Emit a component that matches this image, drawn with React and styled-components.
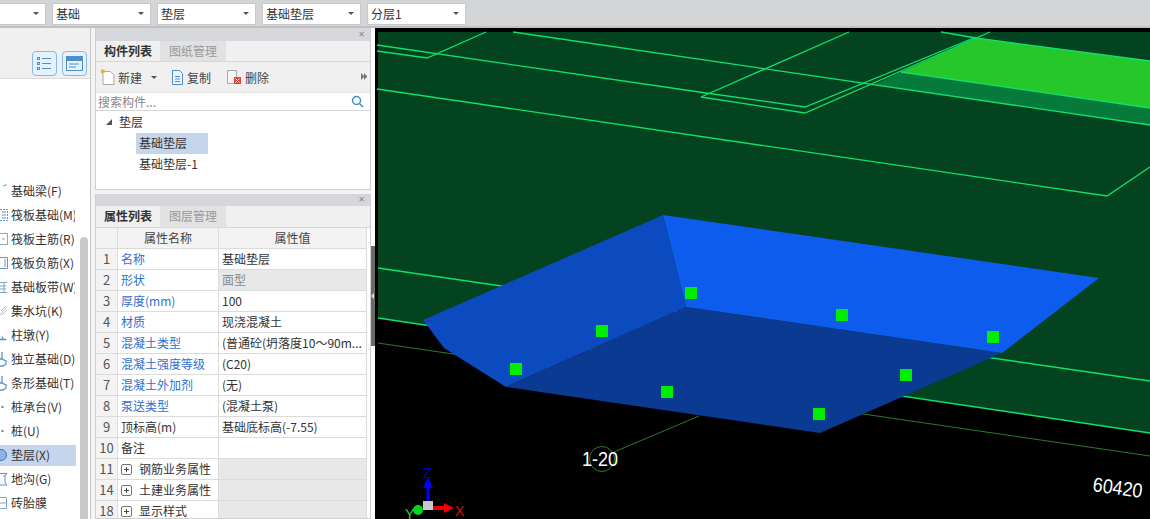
import * as React from 'react';
import styled, { createGlobalStyle } from 'styled-components';

const GlobalStyle = createGlobalStyle`
  html, body { margin: 0; padding: 0; background: #f0f0f0; }
  * { box-sizing: border-box; }
  body { font-family: "Noto Sans CJK SC", "Liberation Sans", sans-serif; font-size: 12px; color: #222; }
`;

const Page = styled.div`
  width: 1150px;
  height: 519px;
  overflow: hidden;
  display: flex;
  flex-direction: column;
  background: #f3f3f3;
`;

const TopBar = styled.div`
  height: 28px;
  flex: none;
  display: flex;
  gap: 6px;
  padding: 3px 0 0;
  margin-left: -53px;
  background: #d3d5d7;
  border-bottom: 2px solid #bfc1c3;
`;

const SelectBox = styled.div`
  width: 99px;
  height: 22px;
  background: #fff;
  border: 1px solid #c6c8ca;
  display: flex;
  align-items: center;
  justify-content: space-between;
  padding: 0 6px 1px 3px;
  font-size: 12px;
  line-height: 20px;
  color: #333;
`;

const Caret = styled.span`
  width: 0;
  height: 0;
  border-left: 3px solid transparent;
  border-right: 3px solid transparent;
  border-top: 3px solid #555;
`;

const Body = styled.div`
  flex: 1;
  min-height: 0;
  display: flex;
`;

const LeftPane = styled.div`
  width: 91px;
  flex: none;
  background: #fff;
  border-right: 1px solid #c8c8c8;
  display: flex;
  flex-direction: column;
  overflow: hidden;
  position: relative;
`;

const LeftHead = styled.div`
  height: 51px;
  flex: none;
  background: #f0f0f0;
  border-bottom: 1px solid #d8dce0;
  display: flex;
  justify-content: flex-end;
  align-items: flex-end;
  gap: 5px;
  padding: 0 3px 2px 0;
`;

const ViewButton = styled.div`
  width: 25px;
  height: 25px;
  border: 1px solid #86b8e8;
  border-radius: 4px;
  background: #e6f1fb;
  display: flex;
  align-items: center;
  justify-content: center;
`;

const NavList = styled.div`
  padding-top: 100px;
  display: flex;
  flex-direction: column;
  width: 76px;
`;

const NavItem = styled.div`
  height: 24px;
  display: flex;
  align-items: center;
  white-space: nowrap;
  overflow: hidden;
  font-size: 12px;
  color: #333;
  background: ${(p) => (p.$active ? 'linear-gradient(#fff 2px, #c5d5ec 2px, #c5d5ec 23px, #fff 23px)' : 'transparent')};
`;

const NavLabel = styled.span`
  display: block;
  width: 64px;
  overflow: hidden;
  padding-bottom: 2px;
`;

const NavIcon = styled.svg`
  width: 8px;
  height: 16px;
  margin-right: 3px;
  flex: none;
`;

const Scroll = styled.div`
  position: absolute;
  left: 80px;
  top: 209px;
  width: 8px;
  height: 290px;
  border-radius: 4px;
  background: #c9c9c9;
`;

const Center = styled.div`
  width: 276px;
  margin-left: 4px;
  flex: none;
  display: flex;
  flex-direction: column;
  gap: 4px;
`;

const Panel = styled.div`
  display: flex;
  flex-direction: column;
  border: 1px solid #cfcfcf;
  border-top: 0;
  background: #fff;
  flex: ${(p) => p.$grow || 'none'};
  height: ${(p) => (p.$h ? `${p.$h}px` : 'auto')};
  overflow: hidden;
`;

const Grip = styled.div`
  height: ${(p) => p.$h}px;
  flex: none;
  background: #d5d7da;
  color: #8a8a8a;
  font-size: 8px;
  line-height: ${(p) => p.$h}px;
  text-align: right;
  padding-right: 5px;
  font-family: "DejaVu Sans", sans-serif;
`;

const TabRow = styled.div`
  height: ${(p) => p.$h}px;
  flex: none;
  display: flex;
  background: #f0f0f0;
  border-bottom: 1px solid #d8d8d8;
`;

const Tab = styled.div`
  width: ${(p) => (p.$active ? '64px' : '66px')};
  text-align: center;
  line-height: 19px;
  font-size: 12px;
  font-weight: ${(p) => (p.$active ? 700 : 400)};
  color: ${(p) => (p.$active ? '#333' : '#999')};
  background: ${(p) => (p.$active ? '#f0f0f0' : '#e2e2e2')};
`;

const ActionBar = styled.div`
  height: 30px;
  flex: none;
  background: #f0f0f0;
  display: flex;
  align-items: center;
  padding-left: 4px;
  color: #444;
  position: relative;
`;

const Action = styled.div`
  display: flex;
  align-items: center;
  gap: 3px;
  margin-left: ${(p) => p.$before || 0}px;
  margin-right: ${(p) => p.$gap || 14}px;
  font-size: 12px;
`;

const More = styled.span`
  position: absolute;
  right: 3px;
  top: 11px;
  width: 6px;
  height: 7px;
  display: flex;
  &::before, &::after {
    content: '';
    border-left: 3px solid #777;
    border-top: 3px solid transparent;
    border-bottom: 3px solid transparent;
  }
`;

const SearchRow = styled.div`
  height: 19px;
  flex: none;
  display: flex;
  align-items: center;
  justify-content: space-between;
  padding: 0 6px 0 2px;
  border-top: 1px solid #e4e4e4;
  border-bottom: 1px solid #d6d6d6;
  color: #888;
  font-size: 12px;
`;

const Tree = styled.div`
  flex: 1;
  padding-top: 1px;
  display: flex;
  flex-direction: column;
  font-size: 12px;
  color: #333;
`;

const TreeRoot = styled.div`
  height: 21px;
  display: flex;
  align-items: center;
  gap: 7px;
  padding: 0 0 2px 10px;
`;

const TreeLeaf = styled.div`
  margin-left: 40px;
  width: 72px;
  height: 21px;
  line-height: 19px;
  padding-left: 3px;
  white-space: nowrap;
  background: ${(p) => (p.$active ? '#c5d5ec' : 'transparent')};
`;

const Grid = styled.div`
  display: grid;
  grid-template-columns: 22px 101px 148px;
  grid-auto-rows: 21px;
  font-size: 12px;
  line-height: 20px;
`;

const Cell = styled.div`
  border-right: 1px solid #dcdcdc;
  border-bottom: 1px solid #dcdcdc;
  white-space: nowrap;
  overflow: hidden;
  padding-left: 3px;
  display: flex;
  align-items: center;
  gap: 7px;
  color: ${(p) => p.$color || '#333'};
  background: ${(p) => p.$bg || '#fff'};
`;

const HeadCell = styled(Cell)`
  justify-content: center;
  padding: 0;
  background: #f3f3f3;
  color: #444;
`;

const NumCell = styled(Cell)`
  justify-content: center;
  padding: 0;
  font-size: 13px;
  background: #f3f3f3;
  color: #555;
`;

const PlusBox = styled.span`
  width: 11px;
  height: 11px;
  border: 1px solid #777;
  border-radius: 2px;
  flex: none;
  position: relative;
  &::before { content: ''; position: absolute; left: 2px; right: 2px; top: 4px; height: 1px; background: #444; }
  &::after { content: ''; position: absolute; top: 2px; bottom: 2px; left: 4px; width: 1px; background: #444; }
`;

const Divider = styled.div`
  width: 4px;
  flex: none;
  display: flex;
  align-items: center;
  background: #fff;
`;

const Handle = styled.div`
  width: 4px;
  height: 100px;
  margin-top: 45px;
  background: #6a6a6a;
  position: relative;
  &::after {
    content: '';
    position: absolute;
    left: 0;
    top: 47px;
    border-right: 3px solid #d8d8d8;
    border-top: 3px solid transparent;
    border-bottom: 3px solid transparent;
  }
`;

const Viewport = styled.svg`
  flex: 1;
  display: block;
  height: 491px;
  background: #000;
`;

const LINE = '#10e06c';
const SANS = 'Liberation Sans, sans-serif';

const navItems = [
  ['基础梁(F)', 'beam'],
  ['筏板基础(M)', 'raft'],
  ['筏板主筋(R)', 'outline'],
  ['筏板负筋(X)', 'frame'],
  ['基础板带(W)', 'strip'],
  ['集水坑(K)', 'pit'],
  ['柱墩(Y)', 'pier'],
  ['独立基础(D)', 'foot'],
  ['条形基础(T)', 'foot'],
  ['桩承台(V)', 'dot'],
  ['桩(U)', 'dot'],
  ['垫层(X)', 'disc', true],
  ['地沟(G)', 'trench'],
  ['砖胎膜', 'brick'],
];

const rows = [
  ['1', '名称', '基础垫层', true],
  ['2', '形状', '面型', true, true],
  ['3', '厚度(mm)', '100', true],
  ['4', '材质', '现浇混凝土', true],
  ['5', '混凝土类型', '(普通砼(坍落度10～90m...', true],
  ['6', '混凝土强度等级', '(C20)', true],
  ['7', '混凝土外加剂', '(无)', true],
  ['8', '泵送类型', '(混凝土泵)', true],
  ['9', '顶标高(m)', '基础底标高(-7.55)'],
  ['10', '备注', ''],
];

const groups = [
  ['11', '钢筋业务属性'],
  ['14', '土建业务属性'],
  ['18', '显示样式'],
];

const handles = [
  [691, 293], [842, 315], [993, 337], [602, 331],
  [906, 375], [516, 369], [667, 392], [819, 414],
];

const lines = [
  '377,45 706,93 805,107 976,37',
  '377,51 427,58 486,32',
  '513,32 1150,125',
  '701,97 805,113 990,32',
  '701,97 849,32',
  '941,32 976,38 1150,61',
  '901,72 1150,108',
  '377,89 1107,196 1150,167',
];

const NavGlyph = ({ kind }) => (
  <NavIcon viewBox="0 0 8 16" fill="none">
    {kind === 'beam' && <path d="M3 3.5L6 1.5M6 1.5V3" stroke="#6fa3d8" />}
    {kind === 'raft' && <path d="M0 2.5H7.5V13.5H0M5 4V12M3 4V12" stroke="#5d93cc" strokeDasharray="2 1" />}
    {kind === 'outline' && <path d="M0 2.5H7.5V13.5H0M2 8H5" stroke="#8aa9c8" />}
    {kind === 'frame' && <path d="M0 2.5H7.5V13.5H0M5 4V12" stroke="#6a93bd" />}
    {kind === 'strip' && <path d="M0 3.5H7M0 7H6M0 10H6M0 13.5H7M4 4V13" stroke="#7fa5cc" />}
    {kind === 'pit' && <path d="M0 12L6 5M1 8L6 3M2 12L7 7" stroke="#b4c0cc" />}
    {kind === 'pier' && <path d="M0 12.5H6.5M2.5 9.5V12" stroke="#5d93cc" strokeWidth="1.4" />}
    {kind === 'foot' && <path d="M2 1V8L6 10V13L3 15H0M0 8H3" stroke="#5d93cc" strokeWidth="1.3" />}
    {kind === 'dot' && <circle cx="2.5" cy="8" r="1.2" fill="#7c8c9c" />}
    {kind === 'disc' && <circle cx="1" cy="8" r="5.5" fill="#8db4e2" stroke="#3f78bd" />}
    {kind === 'trench' && <path d="M0 2.5H7L5 5V12L7 14H0M3 5H5" stroke="#5d93cc" />}
    {kind === 'brick' && <path d="M0 2.5H6.5V13.5H0M0 8H6" stroke="#7fa5cc" />}
  </NavIcon>
);

const Scene = () => (
  <Viewport viewBox="375 28 775 491">
    <rect x="375" y="28" width="775" height="491" fill="#000" />
    <polygon points="378,32 1150,32 1150,433 378,318" fill="#03431f" />
    <polygon points="976,38 1150,61 1150,108 901,72" fill="#26c72a" />
    <polygon points="901,72 1150,108 1150,125 874,85" fill="#067a3a" />
    {lines.map((p) => (
      <polyline key={p} points={p} fill="none" stroke={LINE} strokeWidth="1.3" />
    ))}
    <line x1="378" y1="268" x2="1150" y2="381" stroke={LINE} strokeWidth="1.5" />
    <line x1="378" y1="318" x2="1150" y2="433" stroke={LINE} strokeWidth="1.5" />
    <line x1="378" y1="343" x2="1150" y2="456" stroke="#2b7a2b" strokeWidth="1" />
    <line x1="699" y1="416" x2="614" y2="452" stroke="#2b7a2b" strokeWidth="1" />
    <circle cx="602" cy="459" r="12.5" fill="none" stroke="#2b7a2b" strokeWidth="1" />

    <polygon points="663,215 1099,278 1002,353 686,307" fill="#0d5cee" />
    <polygon points="663,215 423,320 444,348 506,387 686,307" fill="#0b4abf" />
    <polygon points="686,307 1002,353 820,433 506,387" fill="#0a3a92" />
    {handles.map(([x, y]) => (
      <rect key={`${x}-${y}`} x={x - 6} y={y - 6} width="12" height="12" fill="#00ee00" />
    ))}

    <text x="582" y="466" fontFamily={SANS} fontSize="20" fill="#fff" textLength="36" lengthAdjust="spacingAndGlyphs">1-20</text>
    <text x="1092" y="491" fontFamily={SANS} fontSize="20" fill="#fff" textLength="50" lengthAdjust="spacingAndGlyphs" transform="rotate(8 1092 491)">60420</text>

    <line x1="428" y1="502" x2="428" y2="484" stroke="#0000ff" strokeWidth="3" />
    <polygon points="428,477 423,488 433,488" fill="#0000ff" />
    <text x="423" y="478" fontFamily={SANS} fontSize="14" fill="#0000c8">Z</text>
    <line x1="432" y1="508" x2="446" y2="508" stroke="#ee0000" strokeWidth="4" />
    <polygon points="454,508 444,503 444,513" fill="#ee0000" />
    <text x="455" y="516" fontFamily={SANS} fontSize="14" fill="#d01010">X</text>
    <circle cx="418" cy="510" r="5" fill="#00d820" />
    <text x="405" y="519" fontFamily={SANS} fontSize="14" fill="#30d040">Y</text>
    <rect x="423" y="501" width="10" height="9" fill="#c8c8c8" />
  </Viewport>
);

export default function App() {
  return (
    <Page>
      <GlobalStyle />
      <TopBar>
        {['', '基础', '垫层', '基础垫层', '分层1'].map((t, i) => (
          <SelectBox key={i}>
            <span>{t}</span>
            <Caret />
          </SelectBox>
        ))}
      </TopBar>
      <Body>
        <LeftPane>
          <LeftHead>
            <ViewButton>
              <svg width="15" height="15" viewBox="0 0 15 15" fill="none" stroke="#4a8fd0">
                <rect x="0.5" y="1.5" width="2" height="2" />
                <rect x="0.5" y="6.5" width="2" height="2" />
                <rect x="0.5" y="11.5" width="2" height="2" />
                <path d="M5 2.5H14M5 7.5H14M5 12.5H14" />
              </svg>
            </ViewButton>
            <ViewButton>
              <svg width="17" height="15" viewBox="0 0 17 15" fill="none">
                <rect x="0.5" y="0.5" width="16" height="14" stroke="#4a8fd0" />
                <rect x="1" y="1" width="15" height="4" fill="#4a8fd0" />
                <path d="M3 8H13M3 11H10" stroke="#4a8fd0" />
              </svg>
            </ViewButton>
          </LeftHead>
          <NavList>
            {navItems.map(([label, kind, active]) => (
              <NavItem key={label} $active={active}>
                <NavGlyph kind={kind} />
                <NavLabel>{label}</NavLabel>
              </NavItem>
            ))}
          </NavList>
          <Scroll />
        </LeftPane>
        <Center>
          <Panel $h={162}>
            <Grip $h={13}>✕</Grip>
            <TabRow $h={21}>
              <Tab $active>构件列表</Tab>
              <Tab>图纸管理</Tab>
            </TabRow>
            <ActionBar>
              <Action $gap={9}>
                <svg width="15" height="16" viewBox="0 0 15 16" fill="none">
                  <path d="M3 2.5H10.5L14 6V15.5H3Z" fill="#fff" stroke="#aaa" />
                  <path d="M1 0.5L4.5 4M4.5 0.5L1 4M2.7 0V4.5M0.5 2.2H5" stroke="#e8b020" />
                </svg>
                新建
              </Action>
              <Caret />
              <Action $before={14} $gap={15}>
                <svg width="13" height="15" viewBox="0 0 13 15" fill="none" stroke="#4a8fd0">
                  <path d="M1.5 0.5H8.5L11.5 3.5V14.5H1.5Z" fill="#eef5fc" />
                  <path d="M4 6.5H9M4 9H9M4 11.5H9" />
                </svg>
                复制
              </Action>
              <Action>
                <svg width="16" height="15" viewBox="0 0 16 15" fill="none">
                  <path d="M1.5 0.5H10.5V13.5H1.5Z" fill="#f5f5f5" stroke="#aaa" />
                  <rect x="8" y="7" width="7" height="7" fill="#d9443c" />
                  <path d="M9.5 8.5L13.5 12.5M13.5 8.5L9.5 12.5" stroke="#fff" />
                </svg>
                删除
              </Action>
              <More />
            </ActionBar>
            <SearchRow>
              搜索构件...
              <svg width="13" height="13" viewBox="0 0 13 13" fill="none" stroke="#3d8bcf" strokeWidth="1.5">
                <circle cx="5.5" cy="5.5" r="4" />
                <path d="M8.5 8.5L12 12" />
              </svg>
            </SearchRow>
            <Tree>
              <TreeRoot>
                <svg width="6" height="6" viewBox="0 0 6 6">
                  <polygon points="6,0 6,6 0,6" fill="#555" />
                </svg>
                垫层
              </TreeRoot>
              <TreeLeaf $active>基础垫层</TreeLeaf>
              <TreeLeaf>基础垫层-1</TreeLeaf>
            </Tree>
          </Panel>
          <Panel $grow="1">
            <Grip $h={12}>✕</Grip>
            <TabRow $h={22}>
              <Tab $active>属性列表</Tab>
              <Tab>图层管理</Tab>
            </TabRow>
            <Grid>
              <HeadCell />
              <HeadCell>属性名称</HeadCell>
              <HeadCell>属性值</HeadCell>
              {rows.map(([n, name, value, link, locked]) => (
                <React.Fragment key={n}>
                  <NumCell>{n}</NumCell>
                  <Cell $color={link ? '#2f6fd0' : '#333'}>{name}</Cell>
                  <Cell $bg={locked ? '#e8e8e8' : '#fff'} $color={locked ? '#888' : '#333'}>{value}</Cell>
                </React.Fragment>
              ))}
              {groups.map(([n, name]) => (
                <React.Fragment key={n}>
                  <NumCell>{n}</NumCell>
                  <Cell><PlusBox />{name}</Cell>
                  <Cell $bg="#e8e8e8" />
                </React.Fragment>
              ))}
            </Grid>
          </Panel>
        </Center>
        <Divider>
          <Handle />
        </Divider>
        <Scene />
      </Body>
    </Page>
  );
}
